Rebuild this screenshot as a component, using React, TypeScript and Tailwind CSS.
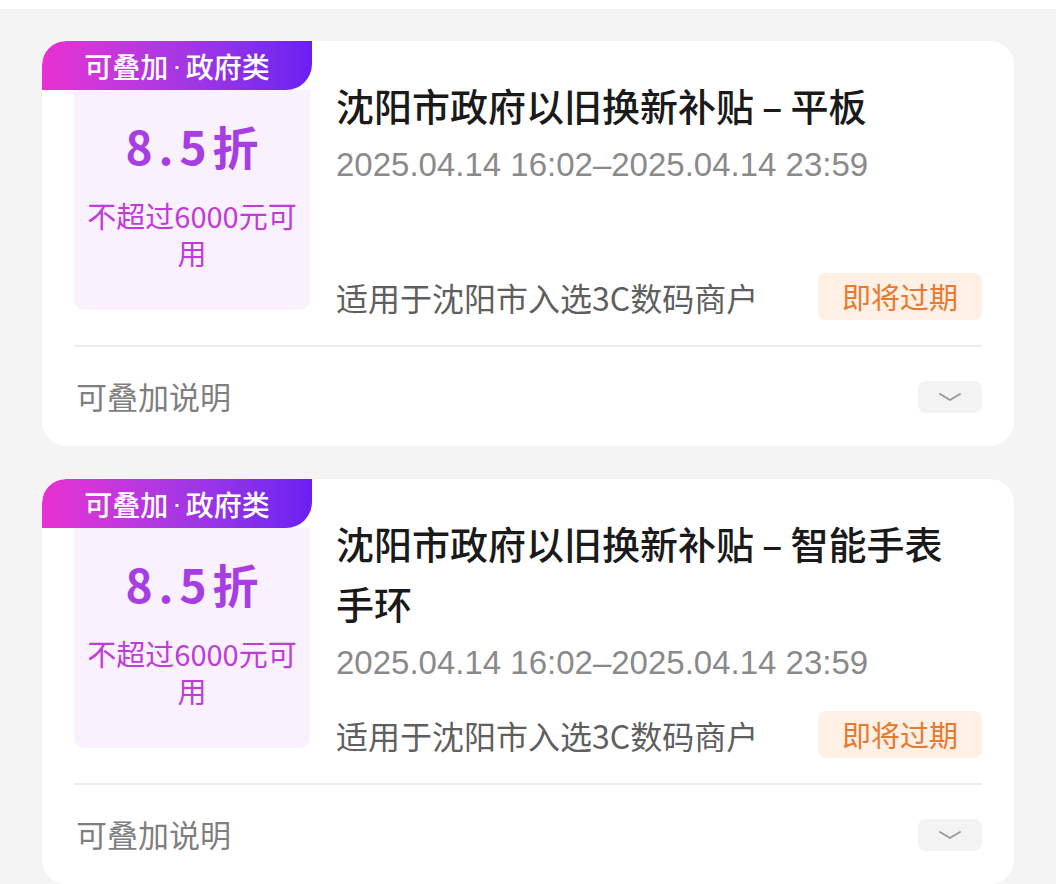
import React from "react";

type Coupon = {
  title: string;
  time: string;
  scope: string;
};

const coupons: Coupon[] = [
  {
    title: "沈阳市政府以旧换新补贴–平板",
    time: "2025.04.14 16:02–2025.04.14 23:59",
    scope: "适用于沈阳市入选3C数码商户",
  },
  {
    title: "沈阳市政府以旧换新补贴–智能手表手环",
    time: "2025.04.14 16:02–2025.04.14 23:59",
    scope: "适用于沈阳市入选3C数码商户",
  },
];

function Chevron() {
  return (
    <svg width="24" height="10" viewBox="0 0 24 10" fill="none">
      <path d="M2 2 L12 8 L22 2" stroke="#9a9a9a" strokeWidth="2" strokeLinecap="round" strokeLinejoin="round" />
    </svg>
  );
}

// the dash in the title renders wider in the original app font
function Title({ text }: { text: string }) {
  const [a, b] = text.split("–");
  return (
    <div className="pr-[10px] text-[38px] font-medium leading-[60px] text-[#1a1a1a]">
      {a}
      <span className="mx-[8px]">–</span>
      {b}
    </div>
  );
}

function CouponCard({ c }: { c: Coupon }) {
  return (
    <div className="relative overflow-hidden rounded-[24px] bg-white px-[32px]">
      {/* corner badge */}
      <div className="absolute left-0 top-0 flex h-[49px] w-[270px] items-center justify-center rounded-tl-[24px] rounded-br-[26px] bg-gradient-to-r from-[#e92fd2] to-[#6a1ef2] text-[28px] font-medium text-white">
        可叠加<span className="mx-[4px] font-['Liberation_Sans',sans-serif]">·</span>政府类
      </div>

      <div className="flex h-[279px] items-start gap-[26px]">
        <div className="mt-[49px] flex h-[220px] w-[236px] shrink-0 flex-col items-center rounded-b-[10px] bg-[#faf1fe] px-[8px] pt-[27px] text-center">
          <div className="-mr-[6px] text-[46px] font-bold leading-[56px] tracking-[6px] text-[#a73ee4]">8.5折</div>
          <div className="mt-[24px] text-[29px] leading-[37px] text-[#c13bd9]">不超过6000元可用</div>
        </div>

        <div className="flex h-full flex-1 flex-col justify-between pt-[34px]">
          <div>
            <Title text={c.title} />
            <div className="font-['Liberation_Sans','Noto_Sans_CJK_SC',sans-serif] text-[33px] leading-[60px] text-[#8a8a8a]">
              {c.time}
            </div>
          </div>
          <div className="flex h-[47px] items-center justify-between">
            <span className="text-[32px] text-[#5f5f5f]">{c.scope}</span>
            <span className="flex h-[47px] items-center rounded-[8px] bg-[#fff0e6] px-[24px] text-[29px] text-[#e8792f]">
              即将过期
            </span>
          </div>
        </div>
      </div>

      <div className="mt-[25px] border-t-2 border-[#eeeeee]" />

      <div className="flex h-[99px] items-center justify-between">
        <span className="pl-[2px] text-[31px] text-[#7f7f7f]">可叠加说明</span>
        <span className="flex h-[32px] w-[64px] items-center justify-center rounded-[8px] bg-[#f3f3f3]">
          <Chevron />
        </span>
      </div>
    </div>
  );
}

export default function App() {
  return (
    <div className="min-h-screen bg-[#f4f4f4] font-['Noto_Sans_CJK_SC',sans-serif]">
      <div className="h-[9px] bg-white" />
      <div className="flex flex-col gap-[33px] px-[42px] pt-[32px]">
        {coupons.map((c, i) => (
          <CouponCard key={i} c={c} />
        ))}
      </div>
    </div>
  );
}
